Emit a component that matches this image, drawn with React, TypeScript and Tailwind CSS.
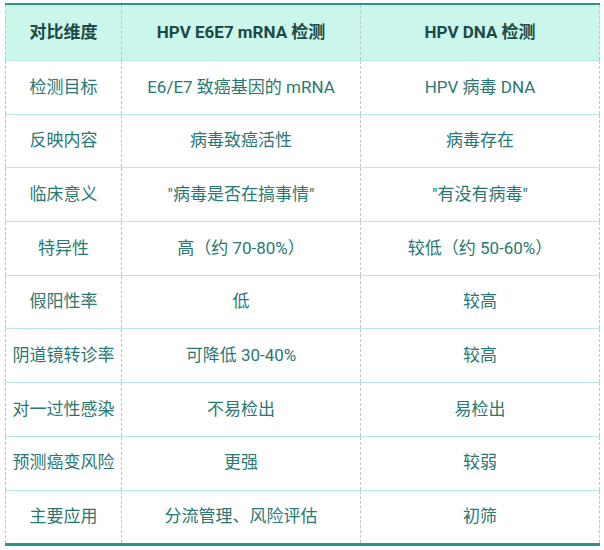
const rows: [string, string, string][] = [
  ['检测目标', 'E6/E7 致癌基因的 mRNA', 'HPV 病毒 DNA'],
  ['反映内容', '病毒致癌活性', '病毒存在'],
  ['临床意义', '"病毒是否在搞事情"', '"有没有病毒"'],
  ['特异性', '高（约 70-80%）', '较低（约 50-60%）'],
  ['假阳性率', '低', '较高'],
  ['阴道镜转诊率', '可降低 30-40%', '较高'],
  ['对一过性感染', '不易检出', '易检出'],
  ['预测癌变风险', '更强', '较弱'],
  ['主要应用', '分流管理、风险评估', '初筛'],
];

export default function App() {
  return (
    <div className="w-[604px] h-[550px] bg-white pt-[3px] pl-[5px] font-['Roboto','Noto_Sans_CJK_SC',sans-serif]">
      <div className="w-[595px] border-t-2 border-b-[3px] border-[#2a9488]">
        <div className="grid grid-cols-[116px_239px_240px] h-[55px] bg-[#cbf6eb] text-[17px] font-bold text-[#1b4a47]">
          <div className="flex items-center justify-center border-l border-dashed border-[#c4c4c4]">对比维度</div>
          <div className="flex items-center justify-center border-l border-dashed border-[#c4c4c4]">HPV E6E7 mRNA 检测</div>
          <div className="flex items-center justify-center border-x border-dashed border-[#c4c4c4]">HPV DNA 检测</div>
        </div>
        {rows.map((r, i) => (
          <div
            key={i}
            className="grid grid-cols-[116px_239px_240px] h-[53.7px] border-t border-[#b5e9e1] text-[17px] text-[#2a7873]"
          >
            <div className="flex items-center justify-center border-l border-dashed border-[#c4c4c4]">{r[0]}</div>
            <div className="flex items-center justify-center border-l border-dashed border-[#c4c4c4]">{r[1]}</div>
            <div className="flex items-center justify-center border-x border-dashed border-[#c4c4c4]">{r[2]}</div>
          </div>
        ))}
      </div>
    </div>
  );
}
